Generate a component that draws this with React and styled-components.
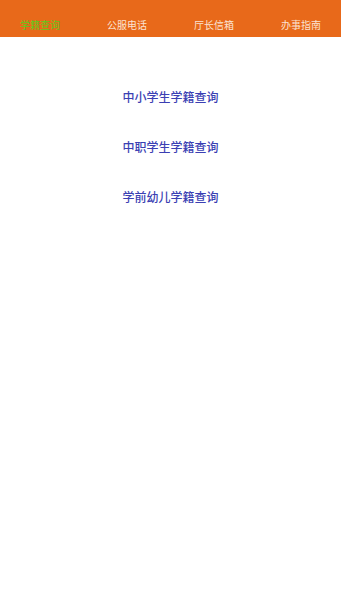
import React, { useState } from "react";
import styled, { createGlobalStyle } from "styled-components";

const tabs = ["学籍查询", "公服电话", "厅长信箱", "办事指南"];
const links = ["中小学生学籍查询", "中职学生学籍查询", "学前幼儿学籍查询"];

export default function App() {
  const [active, setActive] = useState(0);

  return (
    <>
      <GlobalStyle />
      <Page>
        <TopBar>
          {tabs.map((tab, i) => (
            <Tab key={tab} $active={i === active} onClick={() => setActive(i)}>
              {tab}
            </Tab>
          ))}
        </TopBar>
        <LinkList>
          {links.map((item) => (
            <QueryLink key={item} href="#">
              {item}
            </QueryLink>
          ))}
        </LinkList>
      </Page>
    </>
  );
}

const GlobalStyle = createGlobalStyle`
  body {
    margin: 0;
    background: #ffffff;
    font-family: "Noto Sans CJK SC", "Noto Sans", sans-serif;
  }
`;

const Page = styled.div`
  min-height: 595px;
  background: #ffffff;
`;

const TopBar = styled.div`
  height: 37px;
  padding: 0 20px 5px;
  box-sizing: border-box;
  display: flex;
  align-items: flex-end;
  justify-content: space-between;
  background: #e8691a;
`;

const Tab = styled.div`
  font-size: 10px;
  line-height: 14px;
  color: ${(p) => (p.$active ? "#5ecb1c" : "#fbe3d2")};
  cursor: pointer;
`;

const LinkList = styled.div`
  display: flex;
  flex-direction: column;
  align-items: center;
  padding-top: 51px;
  gap: 33px;
`;

const QueryLink = styled.a`
  font-size: 12px;
  line-height: 17px;
  font-weight: 500;
  color: #3b3fb3;
  text-decoration: none;
`;
